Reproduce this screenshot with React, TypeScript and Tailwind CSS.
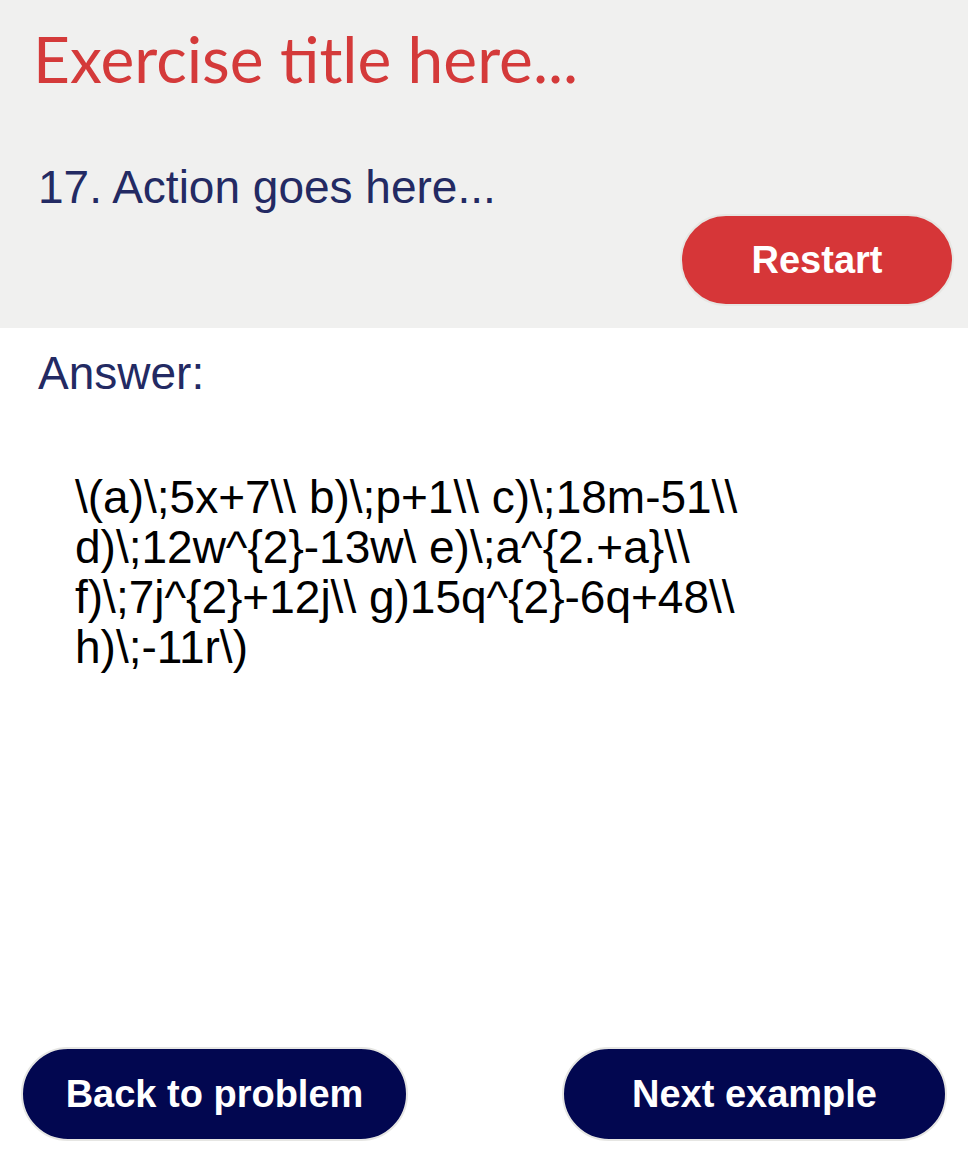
import React from 'react'

const font = { fontFamily: '"Liberation Sans", Arial, sans-serif' }

export default function App() {
  return (
    <div className="w-[968px] h-[1160px] flex flex-col bg-white" style={font}>
      {/* Header */}
      <div className="bg-[#f0f0ef] h-[328px] flex flex-col px-[33px] pt-[19px]">
        <h1 className="text-[64px] leading-[80px] text-[#d43a3a] font-['Lato',sans-serif]">Exercise title here...</h1>
        <p className="mt-[63px] ml-[5px] text-[46px] leading-[50px] text-[#232a63]">17. Action goes here...</p>
        <div className="flex justify-end mt-[2px] mr-[-19px]">
          <button className="w-[274px] h-[92px] rounded-full bg-[#d63638] border-2 border-[#e6e6e3] text-white font-bold text-[38px]">
            Restart
          </button>
        </div>
      </div>

      {/* Answer */}
      <div className="flex-1 flex flex-col px-[38px] pt-[20px]">
        <p className="text-[46px] leading-[50px] text-[#232a63]">Answer:</p>
        <div className="mt-[74px] ml-[37px] w-[700px] text-[46px] leading-[50px] text-black">
          {'\\(a)\\;5x+7\\\\ b)\\;p+1\\\\ c)\\;18m-51\\\\ d)\\;12w^{2}-13w\\ e)\\;a^{2.+a}\\\\ f)\\;7j^{2}+12j\\\\ g)15q^{2}-6q+48\\\\ h)\\;-11r\\)'}
        </div>
      </div>

      {/* Footer */}
      <div className="flex justify-between px-[21px] pb-[19px]">
        <button className="w-[387px] h-[94px] rounded-full bg-[#020750] border-2 border-[#e6e6e3] text-white font-bold text-[38px]">
          Back to problem
        </button>
        <button className="w-[385px] h-[94px] rounded-full bg-[#020750] border-2 border-[#e6e6e3] text-white font-bold text-[38px]">
          Next example
        </button>
      </div>
    </div>
  )
}
